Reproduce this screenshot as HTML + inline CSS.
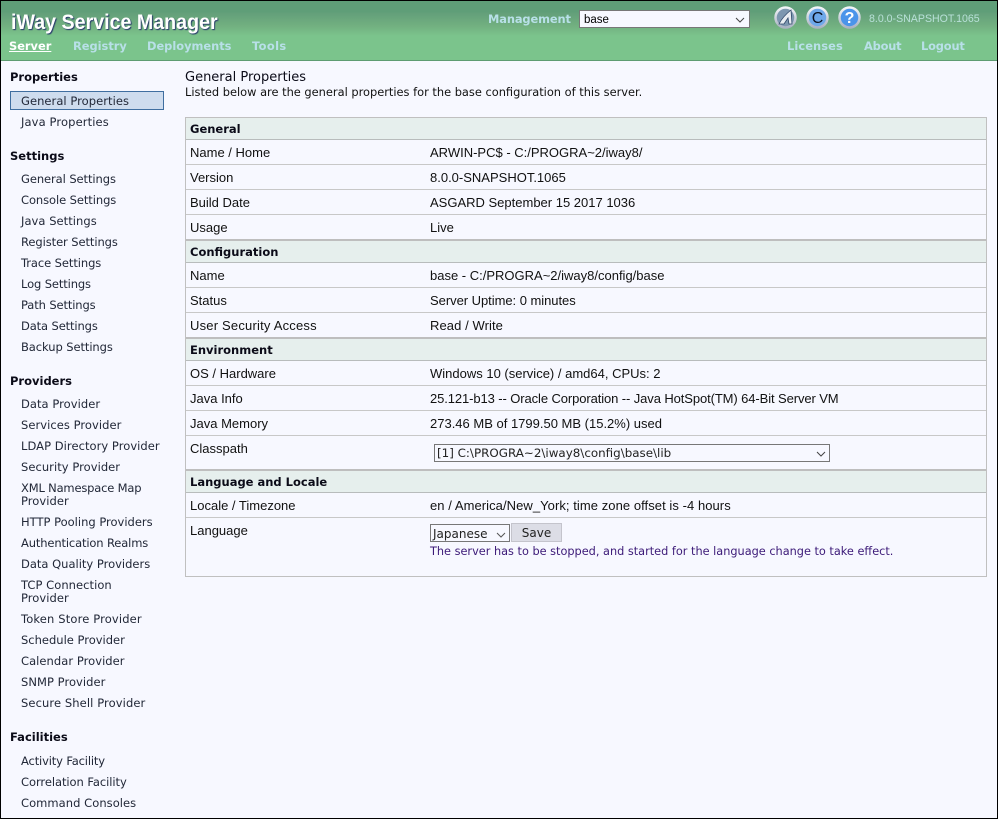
<!DOCTYPE html>
<html><head><meta charset="utf-8"><style>
html,body{margin:0;padding:0}
body{width:998px;height:819px;overflow:hidden;position:relative;background:#f7f8ff;font-family:"DejaVu Sans",sans-serif}
.a,.n,.h,.l,.v,.g,.t,.ln{position:absolute;white-space:nowrap}
.l,.v,.t{margin-top:1px}
.n{left:21px;font-size:11.5px;letter-spacing:.05px;line-height:14px;color:#222838}
.s{letter-spacing:-.08px}
.h{left:10px;font-size:11.5px;line-height:14px;font-weight:bold;color:#0b0b18}
.l{left:190px;font:13px/16px "Liberation Sans",sans-serif;color:#111}
.v{left:430px;font:13px/16px "Liberation Sans",sans-serif;color:#111}
.g{left:190px;font-size:11.5px;font-weight:bold;line-height:14px;color:#0b0b18}
.t{top:38px;font-size:11.4px;font-weight:bold;line-height:14px;color:#b8e0e8}
.ln{left:186px;width:800px;height:1px;background:#c8c8c8}
.hb{position:absolute;left:186px;width:800px;height:21px;background:#e6efed}
.sel{position:absolute;box-sizing:border-box;background:#fff;border:1px solid #777}
.chev{position:absolute}
</style></head><body>
<div class="a" style="left:0;top:0;width:998px;height:60px;background:linear-gradient(#5f9e78 0,#5f9e78 12px,#639f7a 13px,#72b080 26px,#7bc48c 36px,#7bc48c 60px)"></div>
<div class="a" style="left:0;top:60px;width:998px;height:1px;background:#5e9c72"></div>
<div class="a" style="left:11px;top:10px;font:bold 21px/26px 'Liberation Sans',sans-serif;color:#fff;text-shadow:1px 1px 1px #26386a;transform-origin:0 0;transform:scaleX(.935)">iWay Service Manager</div>
<div class="t" style="left:9px;color:#fff;text-decoration:underline">Server</div>
<div class="t" style="left:73px">Registry</div>
<div class="t" style="left:147px">Deployments</div>
<div class="t" style="left:252px;letter-spacing:.4px">Tools</div>
<div class="t" style="left:787px;letter-spacing:.1px">Licenses</div>
<div class="t" style="left:864px;letter-spacing:-.2px">About</div>
<div class="t" style="left:921px;letter-spacing:-.15px">Logout</div>
<div class="t" style="left:488px;top:11px;letter-spacing:-.1px">Management</div>
<div class="sel" style="left:579px;top:10px;width:171px;height:18px;background:#f7f8ff;font:11.5px/18px 'Liberation Sans',sans-serif;padding-left:4px;color:#000;border-color:#777">base</div>
<svg class="chev" style="left:735px;top:17px" width="10" height="6"><path d="M1 1l4 4 4-4" fill="none" stroke="#444"/></svg>
<svg class="a" style="left:773.500px;top:5.500px" width="24" height="24"><defs><linearGradient id="r" x1="0" y1="0" x2="0" y2="1"><stop offset="0" stop-color="#f2f4f8"/><stop offset="1" stop-color="#a9b2c2"/></linearGradient></defs><circle cx="11.500" cy="11.500" r="10" fill="#7d97b0" stroke="url(#r)" stroke-width="2.500"/><path d="M5 18C8 12 12 8 17 4l1 14h-3l-1-6-4 6z" fill="#e8edf2" stroke="#30486a" stroke-width=".8"/></svg>
<svg class="a" style="left:805.500px;top:5.500px" width="24" height="24"><circle cx="11.500" cy="11.500" r="10" fill="#6ea8ea" stroke="url(#r)" stroke-width="2.500"/><text x="11.500" y="17" text-anchor="middle" font-family="Liberation Sans" font-size="16" fill="#0a1020">C</text></svg>
<svg class="a" style="left:837.500px;top:5.500px" width="24" height="24"><circle cx="11.500" cy="11.500" r="10" fill="#4b94ea" stroke="url(#r)" stroke-width="2.500"/><text x="11.500" y="17" text-anchor="middle" font-family="Liberation Sans" font-weight="bold" font-size="16" fill="#fff">?</text></svg>
<div class="a" style="left:869px;top:12px;font:10.600px/14px 'Liberation Sans',sans-serif;color:#b8e0d8">8.0.0-SNAPSHOT.1065</div>

<div class="h" style="top:70px">Properties</div>
<div class="a" style="left:10px;top:91px;width:152px;height:17px;background:#cedcee;border:1px solid #3f6ea0"></div>
<div class="n" style="top:94px">General Properties</div>
<div class="n" style="top:115px;letter-spacing:.12px">Java Properties</div>
<div class="h" style="top:149px">Settings</div>
<div class="n s" style="top:172px">General Settings</div>
<div class="n s" style="top:193px">Console Settings</div>
<div class="n" style="top:214px">Java Settings</div>
<div class="n s" style="top:235px">Register Settings</div>
<div class="n s" style="top:256px">Trace Settings</div>
<div class="n s" style="top:277px;letter-spacing:-.12px">Log Settings</div>
<div class="n s" style="top:298px;letter-spacing:-.12px">Path Settings</div>
<div class="n s" style="top:319px;letter-spacing:-.12px">Data Settings</div>
<div class="n s" style="top:340px">Backup Settings</div>
<div class="h" style="top:374px">Providers</div>
<div class="n" style="top:397px">Data Provider</div>
<div class="n" style="top:418px">Services Provider</div>
<div class="n" style="top:439px">LDAP Directory Provider</div>
<div class="n" style="top:460px">Security Provider</div>
<div class="n" style="top:481px;letter-spacing:-.18px">XML Namespace Map</div>
<div class="n" style="top:494px">Provider</div>
<div class="n" style="top:515px;letter-spacing:0">HTTP Pooling Providers</div>
<div class="n" style="top:536px;letter-spacing:-.14px">Authentication Realms</div>
<div class="n" style="top:557px;letter-spacing:0">Data Quality Providers</div>
<div class="n" style="top:578px">TCP Connection</div>
<div class="n" style="top:591px">Provider</div>
<div class="n" style="top:612px;letter-spacing:.15px">Token Store Provider</div>
<div class="n" style="top:633px;letter-spacing:0">Schedule Provider</div>
<div class="n" style="top:654px">Calendar Provider</div>
<div class="n" style="top:675px">SNMP Provider</div>
<div class="n" style="top:696px;letter-spacing:.1px">Secure Shell Provider</div>
<div class="h" style="top:730px">Facilities</div>
<div class="n" style="top:754px;letter-spacing:-.15px">Activity Facility</div>
<div class="n" style="top:775px;letter-spacing:-.06px">Correlation Facility</div>
<div class="n" style="top:796px">Command Consoles</div>

<div class="a" style="left:185px;top:70px;font-size:13px;line-height:15px;color:#0b0b18">General Properties</div>
<div class="a" style="left:185px;top:85px;font-size:11.400px;line-height:14px;color:#111">Listed below are the general properties for the base configuration of this server.</div>

<div class="a" style="left:185px;top:117px;width:800px;height:458px;border:1px solid #c0c0c0"></div>
<div class="hb" style="top:118px"></div>
<div class="hb" style="top:241px"></div>
<div class="hb" style="top:339px"></div>
<div class="hb" style="top:471px"></div>
<div class="ln" style="top:139px;background:#b8bcbc"></div>
<div class="ln" style="top:164px"></div><div class="ln" style="top:189px"></div><div class="ln" style="top:214px"></div>
<div class="ln" style="top:239px;height:2px;background:#bebebe"></div>
<div class="ln" style="top:262px;background:#b8bcbc"></div>
<div class="ln" style="top:287px"></div><div class="ln" style="top:312px"></div>
<div class="ln" style="top:337px;height:2px;background:#bebebe"></div>
<div class="ln" style="top:360px;background:#b8bcbc"></div>
<div class="ln" style="top:385px"></div><div class="ln" style="top:410px"></div><div class="ln" style="top:435px"></div>
<div class="ln" style="top:469px;height:2px;background:#bebebe"></div>
<div class="ln" style="top:492px;background:#b8bcbc"></div>
<div class="ln" style="top:517px"></div>

<div class="g" style="top:122px">General</div>
<div class="l" style="top:144px">Name / Home</div><div class="v" style="top:144px">ARWIN-PC$ - C:/PROGRA~2/iway8/</div>
<div class="l" style="top:169px">Version</div><div class="v" style="top:169px">8.0.0-SNAPSHOT.1065</div>
<div class="l" style="top:194px">Build Date</div><div class="v" style="top:194px">ASGARD September 15 2017 1036</div>
<div class="l" style="top:219px">Usage</div><div class="v" style="top:219px">Live</div>
<div class="g" style="top:245px">Configuration</div>
<div class="l" style="top:267px">Name</div><div class="v" style="top:267px">base - C:/PROGRA~2/iway8/config/base</div>
<div class="l" style="top:292px">Status</div><div class="v" style="top:292px;letter-spacing:-.04px">Server Uptime: 0 minutes</div>
<div class="l" style="top:317px;letter-spacing:.2px">User Security Access</div><div class="v" style="top:317px;letter-spacing:.08px">Read / Write</div>
<div class="g" style="top:343px">Environment</div>
<div class="l" style="top:365px">OS / Hardware</div><div class="v" style="top:365px">Windows 10 (service) / amd64, CPUs: 2</div>
<div class="l" style="top:390px">Java Info</div><div class="v" style="top:390px;letter-spacing:-.1px">25.121-b13 -- Oracle Corporation -- Java HotSpot(TM) 64-Bit Server VM</div>
<div class="l" style="top:415px">Java Memory</div><div class="v" style="top:415px">273.46 MB of 1799.50 MB (15.2%) used</div>
<div class="l" style="top:440px">Classpath</div>
<div class="sel" style="left:434px;top:444px;width:396px;height:18px;background:#f7f8ff;font-size:11.900px;line-height:16px;padding-left:2px;color:#222">[1] C:\PROGRA~2\iway8\config\base\lib</div>
<svg class="chev" style="left:816px;top:451px" width="10" height="6"><path d="M1 1l4 4 4-4" fill="none" stroke="#444"/></svg>
<div class="g" style="top:475px">Language and Locale</div>
<div class="l" style="top:497px">Locale / Timezone</div><div class="v" style="top:497px;letter-spacing:.06px">en / America/New_York; time zone offset is -4 hours</div>
<div class="l" style="top:522px">Language</div>
<div class="sel" style="left:430px;top:524px;width:80px;height:18px;background:#f7f8ff;font-size:12px;line-height:18px;padding-left:2px;color:#222">Japanese</div>
<svg class="chev" style="left:496px;top:532px" width="10" height="6"><path d="M1 1l4 4 4-4" fill="none" stroke="#555"/></svg>
<div class="a" style="box-sizing:border-box;left:511px;top:523px;width:51px;height:19px;background:#dcdde6;border:1px solid #c4c4cc;font-size:12px;line-height:19px;text-align:center;color:#222">Save</div>
<div class="a" style="left:430px;top:545px;font-size:11.300px;line-height:14px;color:#3c1a78">The server has to be stopped, and started for the language change to take effect.</div>

<div class="a" style="left:0;top:0;width:996px;height:817px;border:1px solid #000"></div>
</body></html>
